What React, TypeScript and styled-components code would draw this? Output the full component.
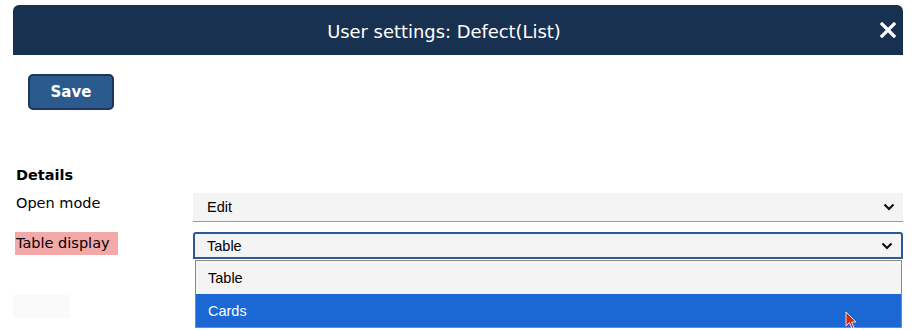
import React from "react";
import styled, { createGlobalStyle } from "styled-components";

const Global = createGlobalStyle`
  html, body { margin: 0; padding: 0; background: #ffffff; }
  body { font-family: "DejaVu Sans", Verdana, sans-serif; }
`;

const Page = styled.div`
  position: relative;
  width: 920px;
  height: 330px;
  overflow: hidden;
  padding: 5px 17px 0 13px;
  box-sizing: border-box;
`;

const Header = styled.div`
  position: relative;
  height: 50px;
  background: #193150;
  border-radius: 6px 6px 0 0;
  display: flex;
  align-items: center;
  justify-content: center;
`;

const Title = styled.h1`
  margin: 0 0 0 -28px;
  font-family: "DejaVu Sans", Verdana, sans-serif;
  font-weight: normal;
  font-size: 17.9px;
  color: #ffffff;
  transform: translateY(1px);
`;

const Close = styled.button`
  position: absolute;
  right: 5px;
  top: 15px;
  width: 20px;
  height: 20px;
  padding: 0;
  border: 0;
  background: transparent;
  display: flex;
  align-items: center;
  justify-content: center;
  cursor: pointer;
`;

const Body = styled.div`
  display: flex;
  flex-direction: column;
`;

const SaveButton = styled.button`
  margin: 19px 0 0 15px;
  width: 86px;
  height: 36px;
  box-sizing: border-box;
  background: #2b5a8e;
  border: 2px solid #1b3658;
  border-radius: 5px;
  color: #ffffff;
  font-family: "DejaVu Sans", Verdana, sans-serif;
  font-weight: bold;
  font-size: 15px;
  padding: 0;
`;

const SectionTitle = styled.div`
  margin: 56px 0 0 3px;
  font-weight: bold;
  font-size: 14.5px;
  color: #000;
  line-height: 18px;
`;

const Row = styled.div<{ $gap?: number }>`
  display: grid;
  grid-template-columns: 180px 1fr;
  margin-top: ${(p) => p.$gap ?? 0}px;
`;

const Label = styled.div<{ $error?: boolean }>`
  justify-self: start;
  margin-left: ${(p) => (p.$error ? 2 : 3)}px;
  padding: ${(p) => (p.$error ? "3px 8px 4px 1px" : "2px 0 0 0")};
  background: ${(p) => (p.$error ? "#f4a9a9" : "transparent")};
  font-size: 14.5px;
  line-height: 16px;
  color: #000;
  align-self: start;
`;

const FieldWrap = styled.div`
  position: relative;
  display: flex;
  flex-direction: column;
`;

const Select = styled.div<{ $focused?: boolean }>`
  height: ${(p) => (p.$focused ? 27 : 29)}px;
  box-sizing: border-box;
  background: #f4f4f4;
  display: flex;
  align-items: center;
  justify-content: space-between;
  font-family: "Liberation Sans", Arial, sans-serif;
  font-size: 14.5px;
  color: #000;
  padding: ${(p) => (p.$focused ? "0 8px 0 12px" : "0 8px 0 14px")};
  border: ${(p) => (p.$focused ? "2px solid #2c5b91" : "none")};
  border-bottom: ${(p) => (p.$focused ? "2px solid #2c5b91" : "1px solid #9a9a9a")};
  border-radius: ${(p) => (p.$focused ? "3px 3px 0 0" : "0")};
`;

const Options = styled.div`
  margin: 1px 1px 0 2px;
  border: 1px solid #8a8a8a;
  display: flex;
  flex-direction: column;
`;

const Option = styled.div<{ $selected?: boolean }>`
  height: 33px;
  display: flex;
  align-items: center;
  padding-left: 12px;
  font-family: "Liberation Sans", Arial, sans-serif;
  font-size: 14.5px;
  background: ${(p) => (p.$selected ? "#1b67d4" : "#f4f4f4")};
  color: ${(p) => (p.$selected ? "#ffffff" : "#000000")};
`;

const Ghost = styled.div`
  width: 57px;
  height: 23px;
  background: #fafafa;
  margin-top: -33px;
`;

const Cursor = styled.svg`
  position: absolute;
  left: 845px;
  top: 311px;
`;

const Chevron = () => (
  <svg width="12" height="8" viewBox="0 0 12 8">
    <polyline points="1.5,1.5 6,6 10.5,1.5" fill="none" stroke="#111" strokeWidth="2.2" />
  </svg>
);

export default function App() {
  return (
    <>
      <Global />
      <Page>
        <Header>
          <Title>User settings: Defect(List)</Title>
          <Close aria-label="Close">
            <svg width="16" height="16" viewBox="0 0 16 16">
              <path d="M2 2 L14 14 M14 2 L2 14" stroke="#fff" strokeWidth="3.2" strokeLinecap="square" />
            </svg>
          </Close>
        </Header>
        <Body>
          <div>
            <SaveButton>Save</SaveButton>
          </div>
          <SectionTitle>Details</SectionTitle>
          <Row $gap={9}>
            <Label>Open mode</Label>
            <FieldWrap>
              <Select>
                <span>Edit</span>
                <Chevron />
              </Select>
            </FieldWrap>
          </Row>
          <Row $gap={10}>
            <Label $error>Table display</Label>
            <FieldWrap>
              <Select $focused>
                <span>Table</span>
                <Chevron />
              </Select>
              <Options>
                <Option>Table</Option>
                <Option $selected>Cards</Option>
              </Options>
            </FieldWrap>
          </Row>
          <Ghost />
        </Body>
        <Cursor width="13" height="19" viewBox="0 0 13 19">
          <path d="M1 1 L1 15 L4.5 11.5 L7 17.5 L9 16.5 L6.6 11 L11 11 Z" fill="#d42a12" stroke="#ffffff" strokeWidth="0.8" />
        </Cursor>
      </Page>
    </>
  );
}
